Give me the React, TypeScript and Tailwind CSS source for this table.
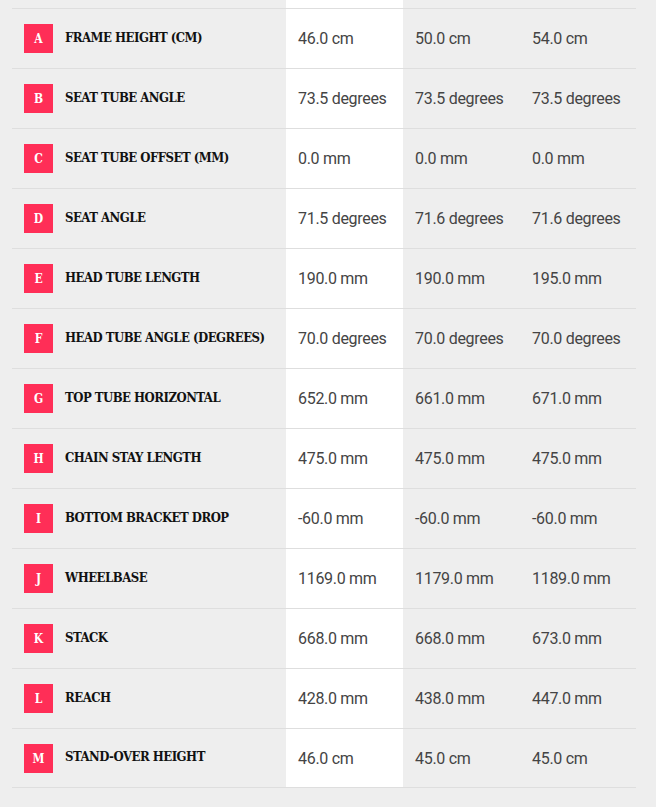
import React from "react";

const rows: [string, string, string, string, string][] = [
  ["A", "FRAME HEIGHT (CM)", "46.0 cm", "50.0 cm", "54.0 cm"],
  ["B", "SEAT TUBE ANGLE", "73.5 degrees", "73.5 degrees", "73.5 degrees"],
  ["C", "SEAT TUBE OFFSET (MM)", "0.0 mm", "0.0 mm", "0.0 mm"],
  ["D", "SEAT ANGLE", "71.5 degrees", "71.6 degrees", "71.6 degrees"],
  ["E", "HEAD TUBE LENGTH", "190.0 mm", "190.0 mm", "195.0 mm"],
  ["F", "HEAD TUBE ANGLE (DEGREES)", "70.0 degrees", "70.0 degrees", "70.0 degrees"],
  ["G", "TOP TUBE HORIZONTAL", "652.0 mm", "661.0 mm", "671.0 mm"],
  ["H", "CHAIN STAY LENGTH", "475.0 mm", "475.0 mm", "475.0 mm"],
  ["I", "BOTTOM BRACKET DROP", "-60.0 mm", "-60.0 mm", "-60.0 mm"],
  ["J", "WHEELBASE", "1169.0 mm", "1179.0 mm", "1189.0 mm"],
  ["K", "STACK", "668.0 mm", "668.0 mm", "673.0 mm"],
  ["L", "REACH", "428.0 mm", "438.0 mm", "447.0 mm"],
  ["M", "STAND-OVER HEIGHT", "46.0 cm", "45.0 cm", "45.0 cm"],
];

const slab = { fontFamily: '"DejaVu Serif Condensed", "DejaVu Serif", serif' };

export default function App() {
  return (
    <div className="min-h-[807px] w-[656px] bg-[#eeeeee] pl-[12px]">
      <div className="w-[624px]">
        <div className="grid h-[8px] grid-cols-[274px_117px_117px_116px]">
          <div />
          <div className="bg-white" />
          <div />
          <div />
        </div>
        {rows.map((r, i) => (
          <div
            key={r[0]}
            className={`grid h-[60px] grid-cols-[274px_117px_117px_116px] border-t border-[#dedede] ${
              i === rows.length - 1 ? "border-b" : ""
            }`}
          >
            <div className="flex items-center pl-[12px]">
              <div
                className="flex h-[29px] w-[29px] items-center justify-center bg-[#ff2e57] pt-[1px] text-[12px] font-bold text-white"
                style={slab}
              >
                {r[0]}
              </div>
              <div
                className="ml-[12px] -mt-[2px] text-[13px] font-bold tracking-[-0.5px] text-[#111]"
                style={slab}
              >
                {r[1]}
              </div>
            </div>
            {[r[2], r[3], r[4]].map((v, j) => (
              <div
                key={j}
                className={`flex items-center pl-[12px] pt-[1px] text-[16px] tracking-[-0.3px] text-[#444] ${
                  j === 0 ? "bg-white" : ""
                }`}
                style={{ fontFamily: "Roboto, sans-serif" }}
              >
                {v}
              </div>
            ))}
          </div>
        ))}
      </div>
    </div>
  );
}
